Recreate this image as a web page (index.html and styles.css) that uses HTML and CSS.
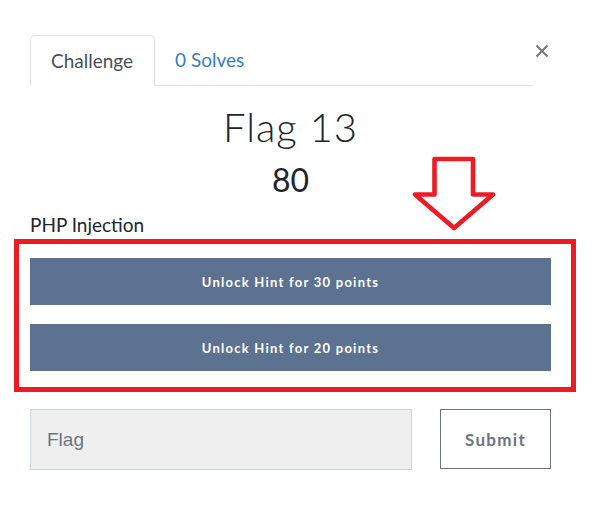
FILE: index.html
```html
<!DOCTYPE html>
<html lang="en">
<head>
<meta charset="utf-8">
<title>Flag 13</title>
<link rel="stylesheet" href="styles.css">
</head>
<body>
<div class="modal">
  <div class="header">
    <ul class="nav">
      <li class="tab active">Challenge</li>
      <li class="tab link">0 Solves</li>
    </ul>
    <button class="close" aria-label="Close">
      <svg width="14" height="14" viewBox="0 0 14 14"><path d="M1.5 1.5 L12.5 12.5 M12.5 1.5 L1.5 12.5" stroke="#7a7a7a" stroke-width="2.2" fill="none"/></svg>
    </button>
  </div>
  <h2 class="title">Flag 13</h2>
  <h3 class="value">80</h3>
  <p class="desc">PHP Injection</p>
  <div class="hints">
    <button class="hint">Unlock Hint for 30 points</button>
    <button class="hint">Unlock Hint for 20 points</button>
  </div>
  <form class="submit-row">
    <input class="flag-input" type="text" placeholder="Flag">
    <button class="submit" type="button">Submit</button>
  </form>
</div>
<div class="annot-box"></div>
<svg class="annot-arrow" width="110" height="90" viewBox="0 0 110 90">
  <polygon points="34.5,9 73,9 73,44.5 93,44.5 54,78 15,44.5 34.5,44.5" fill="none" stroke="#ed1c24" stroke-width="4.6" stroke-linejoin="round"/>
</svg>
</body>
</html>
```

FILE: styles.css
```css
* { box-sizing: border-box; }
html, body { margin: 0; padding: 0; background: #fff; }
body { position: relative; width: 601px; height: 516px; overflow: hidden; font-family: Lato, "Open Sans", sans-serif; color: #212529; }

.modal { padding: 35px 50px 0 30px; }

.header { display: flex; align-items: flex-start; }
.nav { flex: 1; display: flex; list-style: none; margin: 0; padding: 0; border-bottom: 1px solid #dee2e6; height: 51px; }
.tab { height: 51px; padding: 0 20px; font-size: 19px; line-height: 50px; }
.tab.active { width: 125px; border: 1px solid #dee2e6; border-bottom-color: #fff; border-radius: 5px 5px 0 0; color: #495057; background: #fff; }
.tab.link { color: #3b7dbf; }
.close { width: 18px; height: 30px; margin-top: 1px; padding: 0 0 0 0; border: 0; background: none; display: flex; align-items: center; justify-content: center; }

.title { margin: 17px 0 0; text-align: center; font-weight: 300; font-size: 40px; line-height: 48px; letter-spacing: 1px; }
.value { margin: 10px 0 0; text-align: center; font-weight: 400; font-size: 32px; line-height: 38px; }
.desc { margin: 14px 0 0; font-size: 19px; line-height: 24px; }

.hints { display: flex; flex-direction: column; gap: 19px; margin-top: 21px; }
.hint { height: 47px; border: 0; background: #5d7290; color: #fff; font-family: Lato, sans-serif; font-weight: 700; font-size: 13px; letter-spacing: 1.25px; }

.submit-row { display: flex; align-items: flex-start; gap: 28px; margin-top: 38px; }
.flag-input { width: 382px; height: 61px; border: 1px solid #cfd3da; background: #efefef; padding: 0 16px; font-family: "Liberation Sans", Arial, sans-serif; font-size: 19px; color: #495057; }
.flag-input::placeholder { color: #6c757d; }
.submit { width: 111px; height: 60px; border: 1px solid #6c757d; background: #fff; color: #6c757d; font-family: Lato, sans-serif; font-weight: 700; font-size: 17px; letter-spacing: 1.3px; }

.annot-box { position: absolute; left: 14px; top: 239px; width: 562px; height: 153px; border: 5px solid #ed1c24; }
.annot-arrow { position: absolute; left: 400px; top: 150px; }
```
